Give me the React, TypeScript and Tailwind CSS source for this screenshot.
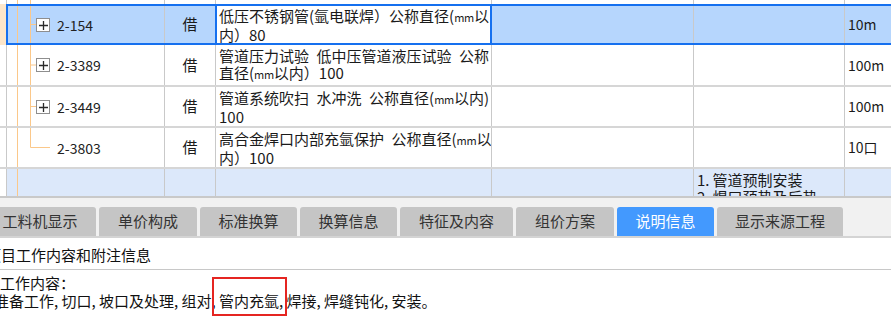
import React from "react";

const V = "border-[#c9c9c9]";

function Mm() {
  return <span className="text-[11px] tracking-[-0.3px]">mm</span>;
}

function PlusBox() {
  return (
    <span className="flex h-[14px] w-[14px] shrink-0 items-center justify-center border border-[#8e8e8e] bg-white">
      <svg width="12" height="12" viewBox="0 0 12 12">
        <path d="M2 6.5H11M6.5 2V11" stroke="#2a2a2a" strokeWidth="1.3" />
      </svg>
    </span>
  );
}

type Kind = "top" | "node" | "last" | "bottom";

function Tree({ start, kind, width }: { start: number; kind: Kind; width: number }) {
  const a = 17 - start + 0.5;
  const b = 30 - start + 0.5;
  const c = "#fbc88a";
  return (
    <svg className="h-full shrink-0" width={width} aria-hidden="true">
      <line x1={a} x2={a} y1="0" y2="100%" stroke={c} strokeWidth="1" />
      {kind !== "bottom" && (
        <line x1={b} x2={b} y1="0" y2={kind === "last" ? "50%" : "100%"} stroke={c} strokeWidth="1" />
      )}
      {(kind === "node" || kind === "last") && (
        <line x1={b} x2={width} y1="50%" y2="50%" stroke={c} strokeWidth="1" />
      )}
    </svg>
  );
}

function Code({ children }: { children: React.ReactNode }) {
  return <span className="ml-[7px] text-[14px] leading-none text-[#222]">{children}</span>;
}

function Desc({ l1, l2 }: { l1: React.ReactNode; l2: React.ReactNode }) {
  return (
    <>
      <div className="leading-[17px]">{l1}</div>
      <div className="leading-[17px]">{l2}</div>
    </>
  );
}

function NormalRow({
  h,
  code,
  box,
  kind,
  desc,
  unit,
  border = true,
}: {
  h: string;
  code: string;
  box: boolean;
  kind: Kind;
  desc: React.ReactNode;
  unit: string;
  border?: boolean;
}) {
  return (
    <div className={`flex ${h} ${border ? "border-b-2 border-b-[#d6d6d6]" : ""}`}>
      <div className={`w-[7px] shrink-0 border-r ${V}`} />
      <div className={`flex w-[158px] shrink-0 items-center border-r ${V}`}>
        <Tree start={7} kind={kind} width={box ? 29 : 43} />
        {box && <PlusBox />}
        <Code>{code}</Code>
      </div>
      <div className={`flex w-[51px] shrink-0 items-center justify-center border-r ${V} text-[15px]`}>借</div>
      <div
        className={`flex w-[276px] shrink-0 flex-col justify-center overflow-hidden whitespace-nowrap border-r ${V} pl-[3px] text-[15px]`}
      >
        {desc}
      </div>
      <div className={`w-[202px] shrink-0 border-r ${V}`} />
      <div className={`w-[151px] shrink-0 border-r ${V}`} />
      <div className="flex flex-1 items-center pl-[3px] text-[14px]">{unit}</div>
    </div>
  );
}

function Grid() {
  return (
    <div className="h-[196px] overflow-hidden text-[#1a1a1a]">
      {/* partial row above */}
      <div className="flex h-[4px]">
        <div className={`w-[7px] shrink-0 border-r ${V}`} />
        <div className={`flex w-[158px] shrink-0 border-r ${V}`}>
          <Tree start={7} kind="top" width={40} />
        </div>
        <div className={`w-[51px] shrink-0 border-r ${V}`} />
        <div className={`w-[276px] shrink-0 border-r ${V}`} />
        <div className={`w-[202px] shrink-0 border-r ${V}`} />
        <div className={`w-[151px] shrink-0 border-r ${V}`} />
        <div className="flex-1" />
      </div>

      {/* selected row */}
      <div className="flex h-[41px]">
        <div className="w-[6px] shrink-0 bg-[#fde6c9]" />
        <div className="flex flex-1 border-2 border-r-0 border-[#1570ef] bg-[#b6d6fd]">
          <div className={`flex w-[157px] shrink-0 items-center border-r ${V}`}>
            <Tree start={8} kind="node" width={28} />
            <PlusBox />
            <Code>2-154</Code>
          </div>
          <div className="flex w-[50px] shrink-0 items-center justify-center text-[15px]">借</div>
          <div className="flex w-[277px] shrink-0 flex-col justify-center overflow-hidden whitespace-nowrap border-x-2 border-[#1570ef] bg-white pl-[2px] text-[15px]">
            <Desc
              l1={
                <>
                  低压不锈钢管(氩电联焊）公称直径(<Mm />以
                </>
              }
              l2={<>内）80</>}
            />
          </div>
          <div className={`w-[202px] shrink-0 border-r ${V}`} />
          <div className={`w-[151px] shrink-0 border-r ${V}`} />
          <div className="flex flex-1 items-center pl-[3px] text-[14px]">10m</div>
        </div>
      </div>

      <NormalRow
        h="h-[42px]"
        code="2-3389"
        box
        kind="node"
        unit="100m"
        desc={
          <Desc
            l1={<>管道压力试验{"\u2002"}低中压管道液压试验{"\u2002"}公称</>}
            l2={
              <>
                直径(<Mm />以内）100
              </>
            }
          />
        }
      />
      <NormalRow
        h="h-[41px]"
        code="2-3449"
        box
        kind="node"
        unit="100m"
        desc={
          <Desc
            l1={
              <>
                管道系统吹扫{"\u2002"}水冲洗{"\u2002"}公称直径(<Mm />以内)
              </>
            }
            l2={<>100</>}
          />
        }
      />
      <NormalRow
        h="h-[41px]"
        code="2-3803"
        box={false}
        kind="last"
        unit="10口"
        desc={
          <Desc
            l1={
              <>
                高合金焊口内部充氩保护{"\u2002"}公称直径(<Mm />以
              </>
            }
            l2={<>内）100</>}
          />
        }
      />

      {/* partially visible row */}
      <div className="flex h-[27px]">
        <div className={`w-[7px] shrink-0 border-r ${V} bg-white`} />
        <div className="flex flex-1 bg-[#dce8fa]">
          <div className={`flex w-[158px] shrink-0 border-r ${V}`}>
            <Tree start={7} kind="bottom" width={20} />
          </div>
          <div className={`w-[51px] shrink-0 border-r ${V}`} />
          <div className={`w-[276px] shrink-0 border-r ${V}`} />
          <div className={`w-[202px] shrink-0 border-r ${V}`} />
          <div
            className={`w-[151px] shrink-0 overflow-hidden whitespace-nowrap border-r ${V} pl-[3px] pt-[2px] text-[15px] leading-[17px]`}
          >
            <div>1.{"\u2009"}管道预制安装</div>
            <div>2.{"\u2009"}焊口预热及后热</div>
          </div>
          <div className="flex-1" />
        </div>
      </div>
    </div>
  );
}

const tabs: { label: string; w: string; active?: boolean }[] = [
  { label: "工料机显示", w: "w-[112px] ml-[-16px]" },
  { label: "单价构成", w: "w-[98px]" },
  { label: "标准换算", w: "w-[97px]" },
  { label: "换算信息", w: "w-[97px]" },
  { label: "特征及内容", w: "w-[113px]" },
  { label: "组价方案", w: "w-[98px]" },
  { label: "说明信息", w: "w-[97px]", active: true },
  { label: "显示来源工程", w: "w-[126px]" },
];

function Tabs() {
  return (
    <div className="flex h-[42px] gap-[3px] overflow-hidden border-b-2 border-t-2 border-b-[#d4d4d4] border-t-[#c9c9c9] bg-[#f1f1f1] pt-[9px]">
      {tabs.map((t) => (
        <div
          key={t.label}
          className={`flex h-[29px] shrink-0 items-center justify-center rounded-t-[3px] text-[15px] ${t.w} ${
            t.active ? "bg-[#4399fe] text-white" : "bg-[#c5c5c5] text-[#333]"
          }`}
        >
          {t.label}
        </div>
      ))}
    </div>
  );
}

function C() {
  return <span className="inline-block w-[7.5px]">,</span>;
}

function Content() {
  return (
    <div className="text-[15px] leading-[18px] text-[#111]">
      <div className="h-[32px] overflow-hidden whitespace-nowrap border-b border-[#c8c8c8] pt-[8px]">
        <span className="ml-[-14px]">项目工作内容和附注信息</span>
      </div>
      <div className="pt-[4px] whitespace-nowrap">
        <div>工作内容：</div>
        <div className="ml-[-6px]">
          准备工作
          <C />
          切口
          <C />
          坡口及处理
          <C />
          组对
          <C />
          <span className="relative inline-block">
            管内充氩
            <C />
            <span className="absolute bottom-[-6px] left-[-7px] right-0 top-[-15px] border-2 border-[#e52521]" />
          </span>
          焊接
          <C />
          焊缝钝化
          <C />
          安装。
        </div>
      </div>
    </div>
  );
}

export default function App() {
  return (
    <div className="h-[325px] w-[891px] overflow-hidden bg-white font-['Noto_Sans_CJK_SC',sans-serif]">
      <Grid />
      <Tabs />
      <Content />
    </div>
  );
}
